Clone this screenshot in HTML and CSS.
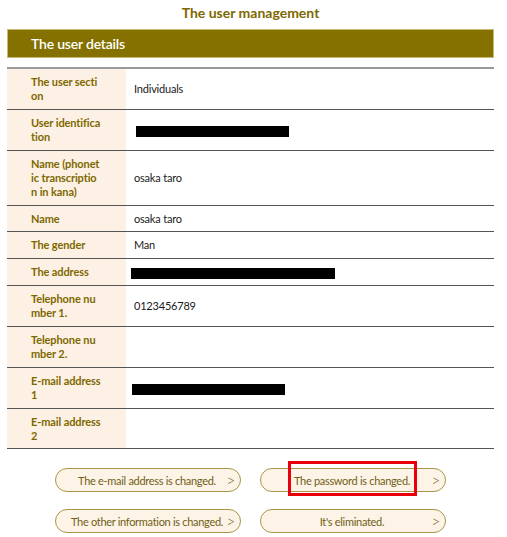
FILE: index.html
```html
<!DOCTYPE html>
<html lang="en">
<head>
  <meta charset="UTF-8">
  <title>The user management</title>
  <link rel="stylesheet" href="styles.css">
</head>
<body>
  <div class="container">
    <h1 class="page-title">The user management</h1>
    <h2 class="section-bar">The user details</h2>

    <table class="details">
      <tr>
        <th>The user secti<br>on</th>
        <td>Individuals</td>
      </tr>
      <tr>
        <th>User identifica<br>tion</th>
        <td><span class="redacted redact-id"></span></td>
      </tr>
      <tr>
        <th>Name (phonet<br>ic transcriptio<br>n in kana)</th>
        <td>osaka taro</td>
      </tr>
      <tr class="tight">
        <th>Name</th>
        <td>osaka taro</td>
      </tr>
      <tr>
        <th>The gender</th>
        <td>Man</td>
      </tr>
      <tr>
        <th>The address</th>
        <td><span class="redacted redact-address"></span></td>
      </tr>
      <tr>
        <th>Telephone nu<br>mber 1.</th>
        <td>0123456789</td>
      </tr>
      <tr>
        <th>Telephone nu<br>mber 2.</th>
        <td></td>
      </tr>
      <tr>
        <th>E-mail address<br>1</th>
        <td><span class="redacted redact-mail"></span></td>
      </tr>
      <tr class="tight">
        <th>E-mail address<br>2</th>
        <td></td>
      </tr>
    </table>

    <div class="actions">
      <button class="pill">The e-mail address is changed.<span class="arrow">&gt;</span></button>
      <button class="pill">The password is changed.<span class="arrow">&gt;</span><span class="mark"></span></button>
      <button class="pill">The other information is changed.<span class="arrow">&gt;</span></button>
      <button class="pill">It's eliminated.<span class="arrow">&gt;</span></button>
    </div>
  </div>
</body>
</html>
```

FILE: styles.css
```css
body {
  font-family: Lato, "Noto Sans", sans-serif;
  background-color: #fff;
  margin: 0;
  padding: 0;
}

.container {
  width: 487px;
  margin-left: 7px;
}

.page-title {
  margin: 0;
  padding-top: 4px;
  height: 25px;
  font-size: 14px;
  line-height: 18px;
  text-align: center;
  color: #7d6800;
}

.section-bar {
  margin: 0;
  height: 27px;
  padding-left: 23px;
  font-size: 14px;
  font-weight: 600;
  letter-spacing: -0.2px;
  line-height: 27px;
  color: #fff;
  background-color: #857100;
  border: 1px solid #c9b977;
}

.details {
  width: 100%;
  margin-top: 9px;
  border-collapse: collapse;
  border-top: 2px solid #999;
  font-size: 11px;
  line-height: 14px;
}

.details th,
.details td {
  padding: 6px 0;
  border-bottom: 1px solid #555;
  text-align: left;
  vertical-align: middle;
}

.details tr.tight th,
.details tr.tight td {
  padding-bottom: 5px;
}

.details th {
  width: 95px;
  padding-left: 24px;
  background-color: #fdf1e5;
  color: #7d6800;
  font-weight: bold;
  letter-spacing: -0.1px;
}

.details td {
  padding-left: 8px;
  color: #1a1a1a;
  letter-spacing: -0.2px;
}

.redacted {
  display: inline-block;
  height: 11px;
  background-color: #000;
  vertical-align: middle;
}

.redact-id { width: 153px; margin-left: 2px; }
.redact-address { width: 204px; margin-left: -3px; }
.redact-mail { width: 153px; margin-left: -2px; }

.actions {
  display: grid;
  grid-template-columns: 186px 186px;
  column-gap: 19px;
  row-gap: 17px;
  justify-content: center;
  margin-top: 19px;
}

.pill {
  position: relative;
  height: 24px;
  padding: 0 12px 0 10px;
  border: 1px solid #a8964a;
  border-radius: 12px;
  background-color: #fdf3e7;
  color: #6f6015;
  font-family: Lato, "Noto Sans", sans-serif;
  font-size: 11px;
  letter-spacing: -0.3px;
  white-space: nowrap;
  text-align: center;
  cursor: pointer;
}

.arrow {
  position: absolute;
  right: 5px;
  top: 2px;
  font-size: 15px;
  font-weight: 300;
  line-height: 18px;
  color: #6f6015;
}

.mark {
  position: absolute;
  left: 27px;
  top: -8px;
  width: 123px;
  height: 29px;
  border: 3px solid #e8000b;
}
```
